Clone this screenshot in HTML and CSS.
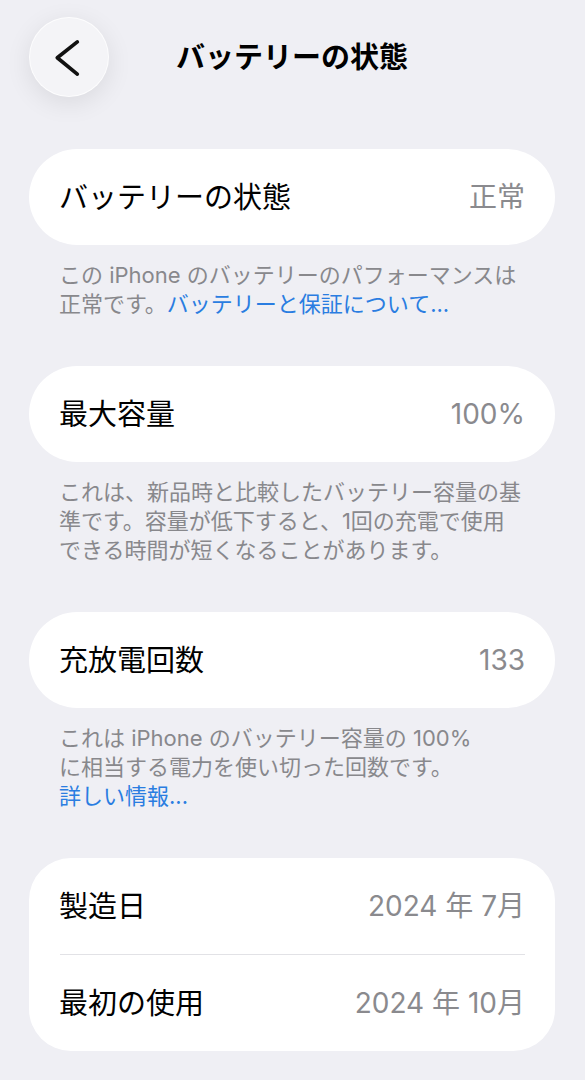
FILE: index.html
```html
<!DOCTYPE html>
<html lang="ja">
<head>
<meta charset="utf-8">
<title>バッテリーの状態</title>
<link rel="stylesheet" href="styles.css">
</head>
<body>
<header class="nav">
  <button class="back" aria-label="戻る">
    <svg width="80" height="80" viewBox="0 0 80 80"><polyline points="48.5,24.5 28,40.8 48.5,57.5" fill="none" stroke="#111" stroke-width="3.8" stroke-linecap="round" stroke-linejoin="round"/></svg>
  </button>
  <h1 class="title">バッテリーの状態</h1>
  <span class="spacer"></span>
</header>

<main class="content">
  <section class="group">
    <div class="card pill">
      <div class="row"><span class="label">バッテリーの状態</span><span class="value">正常</span></div>
    </div>
    <p class="foot">この iPhone のバッテリーのパフォーマンスは<br>正常です。<a class="link">バッテリーと保証について...</a></p>
  </section>

  <section class="group">
    <div class="card pill">
      <div class="row"><span class="label">最大容量</span><span class="value num">100%</span></div>
    </div>
    <p class="foot">これは、新品時と比較したバッテリー容量の基<br>準です。容量が低下すると、1回の充電で使用<br>できる時間が短くなることがあります。</p>
  </section>

  <section class="group">
    <div class="card pill">
      <div class="row"><span class="label">充放電回数</span><span class="value num">133</span></div>
    </div>
    <p class="foot">これは iPhone のバッテリー容量の 100%<br>に相当する電力を使い切った回数です。<br><a class="link">詳しい情報...</a></p>
  </section>

  <section class="group">
    <div class="card rounded">
      <div class="row"><span class="label">製造日</span><span class="value num">2024 年 7月</span></div>
      <div class="divider"></div>
      <div class="row"><span class="label">最初の使用</span><span class="value num">2024 年 10月</span></div>
    </div>
  </section>
</main>
</body>
</html>
```

FILE: styles.css
```css
* { box-sizing: border-box; }

html, body {
  margin: 0;
  padding: 0;
  background: #efeff4;
}

body {
  font-family: "Inter", "Noto Sans CJK JP", sans-serif;
  color: #000;
  padding: 17px 30px 0 29px;
}

.nav {
  display: grid;
  grid-template-columns: 80px 1fr 80px;
  align-items: center;
  height: 80px;
}

.back {
  width: 80px;
  height: 80px;
  padding: 0;
  border-radius: 50%;
  border: 1px solid rgba(255, 255, 255, 0.8);
  background: #f4f4f7;
  box-shadow: 0 6px 26px rgba(0, 0, 0, 0.09);
  display: flex;
  align-items: center;
  justify-content: center;
}

.back svg { display: block; }

.title {
  margin: 0;
  text-align: center;
  font-size: 29px;
  font-weight: 700;
  line-height: 1;
  letter-spacing: 0;
}

.content {
  margin-top: 52px;
}

.group {
  margin-bottom: 47px;
}

.card {
  background: #fff;
  overflow: hidden;
}

.pill { border-radius: 48px; }
.rounded { border-radius: 42px; }

.row {
  height: 96px;
  display: flex;
  align-items: center;
  justify-content: space-between;
  padding: 0 30px 0 30px;
}

.label {
  font-size: 29px;
  line-height: 1;
}

.value {
  font-size: 28px;
  line-height: 1;
  color: #8a8a8e;
}

.divider {
  height: 1px;
  background: #e2e2e6;
  margin: 0 30px 0 31px;
}

.foot {
  margin: 0;
  padding: 16px 20px 0 30px;
  font-size: 22px;
  line-height: 29px;
  color: #88888c;
  white-space: nowrap;
}

.link {
  color: #2a7de1;
}
```
